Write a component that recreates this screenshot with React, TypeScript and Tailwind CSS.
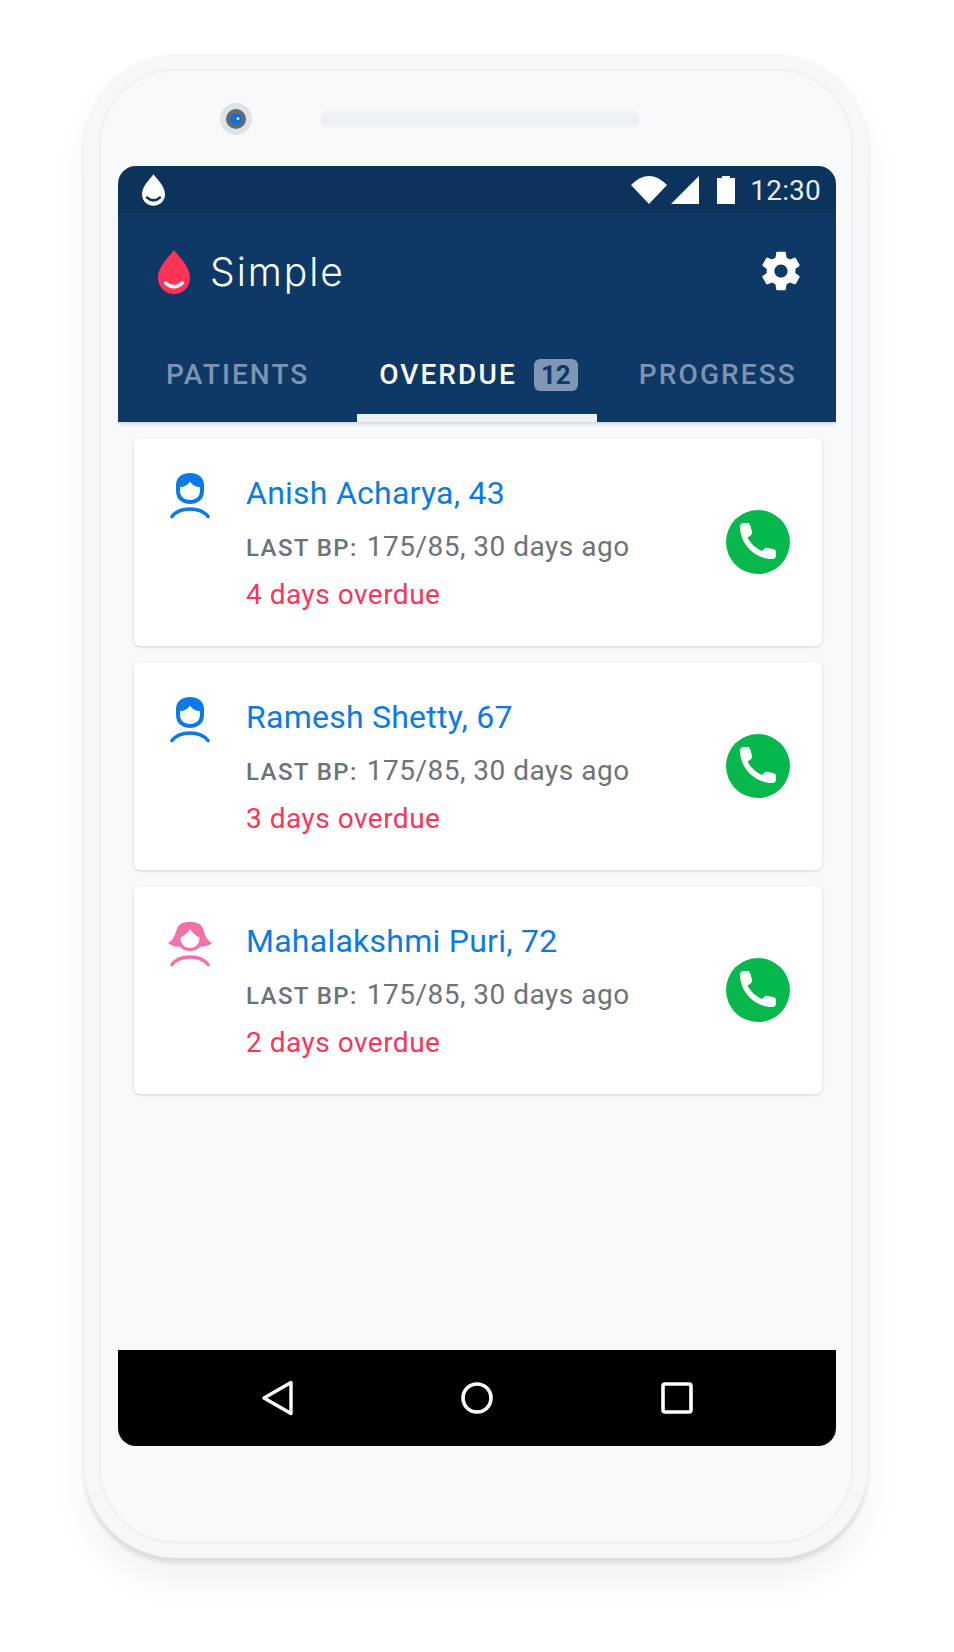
const patients = [
  { name: "Anish Acharya, 43", days: "4 days overdue", female: false },
  { name: "Ramesh Shetty, 67", days: "3 days overdue", female: false },
  { name: "Mahalakshmi Puri, 72", days: "2 days overdue", female: true },
];

function Male() {
  return (
    <svg width="40" height="46" viewBox="0 0 40 46" className="shrink-0">
      <path d="M20 0C11 0 6 5 6 12V18C6 26 12 31 20 31C28 31 34 26 34 18V12C34 5 29 0 20 0Z" fill="#0a7aea" />
      <path d="M10 14C14 14 18 12 20 8.5C22 12 26 14 30 14V17.5C30 23.5 26 27 20 27C14 27 10 23.5 10 17.5Z" fill="#fff" />
      <path d="M2 43.5C6 38.5 12 36 20 36C28 36 34 38.5 38 43.5" fill="none" stroke="#0a7aea" strokeWidth="3.6" strokeLinecap="round" />
    </svg>
  );
}

function Female() {
  return (
    <svg width="40" height="46" viewBox="0 0 40 46" className="shrink-0 overflow-visible">
      <path d="M20 1C12 1 8.5 3 6.5 9C5 14 3.5 19 -2 22C2 25 6 26 9.5 25.5C12 28.5 16 30 20 30C24 30 28 28.5 30.5 25.5C34 26 38 25 42 22C36.5 19 35 14 33.5 9C31.5 3 28 1 20 1Z" fill="#f56fa9" />
      <path d="M10.5 16.5C14 14.5 18 12 20 8C22 12 26 14.5 29.5 16.5C29.5 23 25.5 27 20 27C14.5 27 10.5 23 10.5 16.5Z" fill="#fff" />
      <path d="M2 43.5C6 38.5 12 36 20 36C28 36 34 38.5 38 43.5" fill="none" stroke="#f56fa9" strokeWidth="3.6" strokeLinecap="round" />
    </svg>
  );
}

function PhoneIcon() {
  return (
    <svg width="64" height="64" viewBox="0 0 64 64">
      <circle cx="32" cy="32" r="32" fill="#07b84d" />
      <path d="M18 13L21 13C23 13 24 14 24.5 16L26 22C26.3 24 25.5 25 24 26L21.5 27.5C24 33 30 38.5 36 41L38 39C39 38 40 37.5 42 38L47 39C49 39.5 50 40.5 50 42.5L50 45.5C50 48 48.5 49 46 49C28 48.5 14.5 34 14 17C14 14.5 15.5 13 18 13Z" fill="#fff" />
    </svg>
  );
}

function Card({ name, days, female }: { name: string; days: string; female: boolean }) {
  return (
    <div className="flex h-[208px] items-center rounded-[6px] bg-white pl-[36px] pr-[32px] shadow-[0_1px_3px_rgba(40,60,90,0.2)]">
      <div className="flex flex-1 self-start pt-[32px]">
        <div className="mt-[3px] w-[40px]">{female ? <Female /> : <Male />}</div>
        <div className="ml-[36px]">
          <div className="h-[46px] text-[32px] leading-[46px] tracking-[0.25px] text-[#0a7aea]">{name}</div>
          <div className="mt-[7px] flex h-[48px] items-baseline leading-[47px] text-[#6c737a]">
            <span className="text-[24px] font-medium tracking-[1.4px]">LAST BP:</span>
            <span className="ml-[9px] text-[28px] tracking-[0.5px]">175/85, 30 days ago</span>
          </div>
          <div className="text-[28px] leading-[48px] tracking-[0.5px] text-[#ff3355]">{days}</div>
        </div>
      </div>
      <PhoneIcon />
    </div>
  );
}

export default function App() {
  return (
    <div className="min-h-[1652px] bg-white pt-[54px] pl-[84px] font-['Roboto',sans-serif]">
      <div className="h-[1504px] w-[784px] rounded-[92px] bg-[#f6f7f9] p-[14px] shadow-[0_5px_4px_rgba(0,0,0,0.1),0_24px_36px_rgba(0,0,0,0.05)]">
        <div className="h-[1476px] rounded-[78px] border-[3px] border-[#eff1f4] bg-[#f7f9fb] pl-[17px] pr-[15px]">
          <div className="flex h-[95px] items-center pl-[102px]">
            <svg width="32" height="32" viewBox="0 0 32 32">
              <circle cx="16" cy="16" r="16" fill="#e0e3e6" />
              <circle cx="16" cy="16" r="10" fill="#5d6b7b" />
              <circle cx="16" cy="16" r="5.5" fill="#0b6fd6" />
              <circle cx="18" cy="15.5" r="1.5" fill="#cfe4fa" />
            </svg>
            <div className="ml-[68px] h-[16px] w-[320px] rounded-full bg-[#eef1f4]" />
          </div>
          <div className="flex h-[1280px] flex-col overflow-hidden rounded-[18px] bg-[#f7f9fb]">
            <div className="shadow-[0_2px_4px_rgba(40,60,90,0.2)]">
              <div className="flex h-[47px] items-center justify-between bg-[#0c335c] pl-[24px] pr-[15px]">
                <svg width="23" height="32" viewBox="0 0 32 44" className="mt-[1px]">
                  <path d="M16 0C18 4 32 15 32 28C32 37 25 44 16 44C7 44 0 37 0 28C0 15 14 4 16 0Z" fill="#fff" />
                  <path d="M7 32.5Q16 40.5 25 32.5" fill="none" stroke="#0c335c" strokeWidth="3.5" strokeLinecap="round" />
                </svg>
                <div className="flex items-center">
                  <svg width="36" height="28" viewBox="0 0 36 28">
                    <path d="M0 9Q18 -9 36 9L18 28Z" fill="#fff" />
                  </svg>
                  <svg width="28" height="28" viewBox="0 0 28 28" className="ml-[4px]">
                    <path d="M0 28H28V0Z" fill="#fff" />
                  </svg>
                  <svg width="18" height="28" viewBox="0 0 18 28" className="ml-[18px]">
                    <path d="M0 2H5V0H13V2H18V28H0Z" fill="#fff" />
                  </svg>
                  <span className="ml-[15px] pt-[2px] text-[28px] leading-[47px] tracking-[0.2px] text-[#e8ecf0]">12:30</span>
                </div>
              </div>
              <div className="bg-[#0e3966]">
                <div className="flex h-[121px] items-center justify-between pb-[4px] pl-[40px] pr-[31px]">
                  <div className="flex items-center">
                    <svg width="32" height="44" viewBox="0 0 32 44">
                      <path d="M16 0C18 4 32 15 32 28C32 37 25 44 16 44C7 44 0 37 0 28C0 15 14 4 16 0Z" fill="#ff3355" />
                      <path d="M7.5 33Q16 40.5 24.5 33" fill="none" stroke="#fff" strokeWidth="3.4" strokeLinecap="round" />
                    </svg>
                    <span className="ml-[20px] font-['Inter',sans-serif] text-[39px] font-light leading-[46px] tracking-[2px] text-white">Simple</span>
                  </div>
                  <svg width="48" height="48" viewBox="0 0 24 24" fill="#fff" className="-mt-[2px]">
                    <path d="M19.14 12.94c.04-.3.06-.61.06-.94 0-.32-.02-.64-.07-.94l2.03-1.58a.49.49 0 0 0 .12-.61l-1.92-3.32a.488.488 0 0 0-.59-.22l-2.39.96c-.5-.38-1.03-.7-1.62-.94l-.36-2.54a.484.484 0 0 0-.48-.41h-3.84c-.24 0-.43.17-.47.41l-.36 2.54c-.59.24-1.13.57-1.62.94l-2.39-.96c-.22-.08-.47 0-.59.22L2.74 8.87c-.12.21-.08.47.12.61l2.03 1.58c-.05.3-.09.63-.09.94s.02.64.07.94l-2.03 1.58a.49.49 0 0 0-.12.61l1.92 3.32c.12.22.37.29.59.22l2.39-.96c.5.38 1.03.7 1.62.94l.36 2.54c.05.24.24.41.48.41h3.84c.24 0 .44-.17.47-.41l.36-2.54c.59-.24 1.13-.56 1.62-.94l2.39.96c.22.08.47 0 .59-.22l1.92-3.32c.12-.22.07-.47-.12-.61l-2.01-1.58zM12 15.3c-1.82 0-3.3-1.48-3.3-3.3s1.48-3.3 3.3-3.3 3.3 1.48 3.3 3.3-1.48 3.3-3.3 3.3z" />
                  </svg>
                </div>
                <div className="grid grid-cols-3 text-[28px] font-medium tracking-[2.1px]">
                  <div className="flex h-[88px] items-center justify-center pb-[6px] text-[#7d94b0]">PATIENTS</div>
                  <div className="flex h-[88px] items-center justify-center border-b-[8px] border-[#edf0f4] pl-[3px] pt-[2px] text-white">
                    <span>OVERDUE</span>
                    <span className="ml-[17px] flex h-[32px] w-[44px] items-center justify-center rounded-[6px] bg-[#7f97b3] text-[26px] font-bold tracking-normal text-[#0e3966]">12</span>
                  </div>
                  <div className="flex h-[88px] items-center justify-center pb-[6px] pl-[3px] text-[#7d94b0]">PROGRESS</div>
                </div>
              </div>
            </div>
            <div className="flex flex-1 flex-col gap-[16px] pl-[16px] pr-[14px] pt-[16px]">
              {patients.map((p) => (
                <Card key={p.name} {...p} />
              ))}
            </div>
            <div className="flex h-[96px] items-center justify-center gap-[168px] bg-black">
              <svg width="32" height="36" viewBox="0 0 32 36" fill="none" stroke="#fff" strokeWidth="3.4" strokeLinejoin="round">
                <path d="M30 2.5V33.5L3 18Z" />
              </svg>
              <svg width="32" height="32" viewBox="0 0 32 32" fill="none" stroke="#fff" strokeWidth="3.6">
                <circle cx="16" cy="16" r="14" />
              </svg>
              <svg width="32" height="32" viewBox="0 0 32 32" fill="none" stroke="#fff" strokeWidth="3.6" strokeLinejoin="round">
                <rect x="2" y="2" width="28" height="28" rx="2" />
              </svg>
            </div>
          </div>
        </div>
      </div>
    </div>
  );
}
